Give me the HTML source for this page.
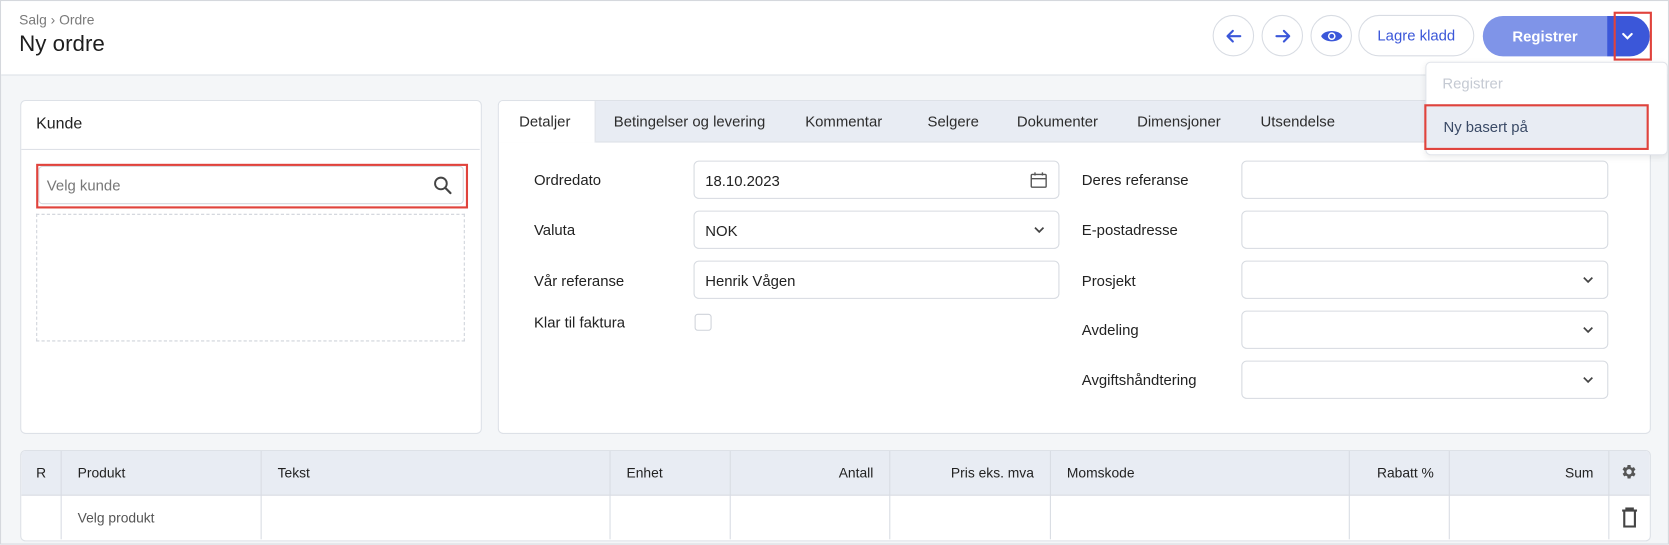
<!DOCTYPE html>
<html><head><meta charset="utf-8"><style>
html,body{margin:0;padding:0;width:1669px;height:545px;overflow:hidden;background:#fff}
#s{position:absolute;left:0;top:0;width:1569px;height:512px;transform:scale(1.0637);transform-origin:0 0;font-family:"Liberation Sans",sans-serif;color:#222;font-size:14px;background:#f4f6f8;border:1px solid #d5d8dd;box-sizing:border-box;overflow:hidden}
.a{position:absolute}
.hdr{left:0;top:0;width:1569px;height:69px;background:#fff;border-bottom:1px solid #dde1e7}
.circ{width:37px;height:37px;border:1px solid #d8dce3;border-radius:50%;top:13px;background:#fff}
.card{background:#fff;border:1px solid #dde1e7;border-radius:5px}
.inp{border:1px solid #d6dae0;border-radius:5px;background:#fff;height:36px;width:344px;box-sizing:border-box}
.lbl{font-size:14px;color:#222}
.tab{top:105px;font-size:14px;color:#2c2c2c}
.th{top:436px;font-size:13px;color:#222}
.vl{top:423px;width:1px;height:83px;background:#d8dce3}
.chev{position:absolute;right:12px;top:12px}
</style></head><body><div id="s">
<div class="a hdr"></div>
<div class="a" style="left:17px;top:10px;font-size:13px;color:#7a7a7a">Salg › Ordre</div>
<div class="a" style="left:17px;top:29px;font-size:21px;color:#1e1e1e">Ny ordre</div>

<div class="a circ" style="left:1139px"><svg class="a" style="left:10px;top:10px" width="18" height="18" viewBox="0 0 18 18"><path d="M15 9H3M8 4L3 9l5 5" stroke="#3b57d9" stroke-width="2" fill="none" stroke-linecap="round" stroke-linejoin="round"/></svg></div>
<div class="a circ" style="left:1185px"><svg class="a" style="left:10px;top:10px" width="18" height="18" viewBox="0 0 18 18"><path d="M3 9h12M10 4l5 5-5 5" stroke="#3b57d9" stroke-width="2" fill="none" stroke-linecap="round" stroke-linejoin="round"/></svg></div>
<div class="a circ" style="left:1231px"><svg class="a" style="left:8px;top:10px" width="22" height="18" viewBox="0 0 22 18"><path d="M1 9C4 2.5 18 2.5 21 9 18 15.5 4 15.5 1 9z" fill="#3b57d9"/><circle cx="11" cy="9" r="3.6" fill="#fff"/><circle cx="11" cy="9" r="2.2" fill="#3b57d9"/></svg></div>
<div class="a" style="left:1276px;top:13px;width:107px;height:37px;border:1px solid #d8dce3;border-radius:20px;background:#fff;color:#3b57d9;font-size:14px;text-align:center;line-height:37px">Lagre kladd</div>
<div class="a" style="left:1393px;top:14px;width:157px;height:38px;border-radius:20px;background:#7f94e8;overflow:hidden">
  <div class="a" style="left:0;top:0;width:117px;height:38px;color:#fff;font-weight:bold;font-size:14px;text-align:center;line-height:38px">Registrer</div>
  <div class="a" style="left:117px;top:0;width:40px;height:38px;background:#3b57d9"><svg class="a" style="left:13px;top:14px" width="12" height="10" viewBox="0 0 12 10"><path d="M2 3l4 4 4-4" stroke="#fff" stroke-width="2" fill="none" stroke-linecap="round"/></svg></div>
</div>
<div class="a" style="left:1516px;top:10px;width:32px;height:42px;border:2px solid #e0433c"></div>

<div class="a card" style="left:18px;top:93px;width:432px;height:312px"></div>
<div class="a" style="left:33px;top:107px;font-size:15px">Kunde</div>
<div class="a" style="left:19px;top:139px;width:431px;height:1px;background:#dde1e7"></div>
<div class="a" style="left:35px;top:155px;width:400px;height:36px;border:1px solid #d6dae0;border-radius:4px;box-sizing:border-box"></div>
<div class="a" style="left:43px;top:165px;color:#777;font-size:14px">Velg kunde</div>
<svg class="a" style="left:406px;top:164px" width="18" height="18" viewBox="0 0 18 18"><circle cx="7.5" cy="7.5" r="5.5" stroke="#444" stroke-width="1.8" fill="none"/><path d="M11.5 11.5l5 5" stroke="#444" stroke-width="2" stroke-linecap="round"/></svg>
<div class="a" style="left:33px;top:153px;width:402px;height:38px;border:2px solid #e0433c"></div>
<div class="a" style="left:33px;top:200px;width:401px;height:118px;border:1px dashed #cfd3da"></div>

<div class="a card" style="left:467px;top:93px;width:1082px;height:312px;overflow:hidden">
  <div class="a" style="left:0;top:0;width:1082px;height:38px;background:#e8ecf3;border-bottom:1px solid #dde1e7"></div>
  <div class="a" style="left:0;top:0;width:90px;height:39px;background:#fff;border-right:1px solid #dde1e7"></div>
</div>
<div class="a tab" style="left:487px">Detaljer</div>
<div class="a tab" style="left:576px">Betingelser og levering</div>
<div class="a tab" style="left:756px">Kommentar</div>
<div class="a tab" style="left:871px">Selgere</div>
<div class="a tab" style="left:955px">Dokumenter</div>
<div class="a tab" style="left:1068px">Dimensjoner</div>
<div class="a tab" style="left:1184px">Utsendelse</div>

<div class="a lbl" style="left:501px;top:160px">Ordredato</div>
<div class="a lbl" style="left:501px;top:207px">Valuta</div>
<div class="a lbl" style="left:501px;top:255px">Vår referanse</div>
<div class="a lbl" style="left:501px;top:294px">Klar til faktura</div>
<div class="a inp" style="left:651px;top:150px"><span class="a" style="left:10px;top:10px">18.10.2023</span><svg class="chev" style="top:9px;right:10px" width="17" height="17" viewBox="0 0 17 17"><rect x="1.5" y="3" width="14" height="12" stroke="#555" stroke-width="1.3" fill="none" rx="1"/><path d="M1.5 7h14M5 1v3M12 1v3" stroke="#555" stroke-width="1.3"/></svg></div>
<div class="a inp" style="left:651px;top:197px"><span class="a" style="left:10px;top:10px">NOK</span><svg class="chev" width="12" height="10" viewBox="0 0 12 10"><path d="M2 3l4 4 4-4" stroke="#444" stroke-width="1.6" fill="none"/></svg></div>
<div class="a inp" style="left:651px;top:244px"><span class="a" style="left:10px;top:10px">Henrik Vågen</span></div>
<div class="a" style="left:652px;top:294px;width:16px;height:16px;border:1px solid #cfd3da;border-radius:3px;box-sizing:border-box"></div>

<div class="a lbl" style="left:1016px;top:160px">Deres referanse</div>
<div class="a lbl" style="left:1016px;top:207px">E-postadresse</div>
<div class="a lbl" style="left:1016px;top:255px">Prosjekt</div>
<div class="a lbl" style="left:1016px;top:301px">Avdeling</div>
<div class="a lbl" style="left:1016px;top:348px">Avgiftshåndtering</div>
<div class="a inp" style="left:1166px;top:150px;width:345px"></div>
<div class="a inp" style="left:1166px;top:197px;width:345px"></div>
<div class="a inp" style="left:1166px;top:244px;width:345px"><svg class="chev" width="12" height="10" viewBox="0 0 12 10"><path d="M2 3l4 4 4-4" stroke="#444" stroke-width="1.6" fill="none"/></svg></div>
<div class="a inp" style="left:1166px;top:291px;width:345px"><svg class="chev" width="12" height="10" viewBox="0 0 12 10"><path d="M2 3l4 4 4-4" stroke="#444" stroke-width="1.6" fill="none"/></svg></div>
<div class="a inp" style="left:1166px;top:338px;width:345px"><svg class="chev" width="12" height="10" viewBox="0 0 12 10"><path d="M2 3l4 4 4-4" stroke="#444" stroke-width="1.6" fill="none"/></svg></div>

<div class="a" style="left:1339px;top:57px;width:226px;height:86px;background:#fff;border:1px solid #e1e4ea;border-radius:5px;box-shadow:0 2px 6px rgba(0,0,0,.08)"></div>
<div class="a" style="left:1355px;top:69px;color:#c5cad3;font-size:14px">Registrer</div>
<div class="a" style="left:1339px;top:97px;width:210px;height:41px;background:#e8ecf3"></div>
<div class="a" style="left:1356px;top:110px;color:#3a4a66;font-size:14px">Ny basert på</div>
<div class="a" style="left:1338px;top:97px;width:207px;height:39px;border:2px solid #e0433c"></div>

<div class="a card" style="left:18px;top:422px;width:1531px;height:84px;overflow:hidden">
  <div class="a" style="left:0;top:0;width:1531px;height:41px;background:#e8ecf3;border-bottom:1px solid #d8dce3"></div>
</div>
<div class="a vl" style="left:56px"></div><div class="a vl" style="left:244px"></div><div class="a vl" style="left:572px"></div><div class="a vl" style="left:685px"></div><div class="a vl" style="left:835px"></div><div class="a vl" style="left:986px"></div><div class="a vl" style="left:1267px"></div><div class="a vl" style="left:1361px"></div><div class="a vl" style="left:1511px"></div>
<div class="a th" style="left:33px">R</div>
<div class="a th" style="left:72px">Produkt</div>
<div class="a th" style="left:260px">Tekst</div>
<div class="a th" style="left:588px">Enhet</div>
<div class="a th" style="left:720px;width:100px;text-align:right">Antall</div>
<div class="a th" style="left:851px;width:120px;text-align:right">Pris eks. mva</div>
<div class="a th" style="left:1002px">Momskode</div>
<div class="a th" style="left:1247px;width:100px;text-align:right">Rabatt %</div>
<div class="a th" style="left:1397px;width:100px;text-align:right">Sum</div>
<svg class="a" style="left:1522px;top:434px" width="17" height="17" viewBox="0 0 24 24"><path fill="#555" d="M19.4 13a7.5 7.5 0 000-2l2.1-1.6-2-3.5-2.5 1a7 7 0 00-1.7-1L15 3h-4l-.4 2.7a7 7 0 00-1.7 1l-2.5-1-2 3.5L6.6 11a7.5 7.5 0 000 2l-2.1 1.6 2 3.5 2.5-1a7 7 0 001.7 1L11 21h4l.4-2.7a7 7 0 001.7-1l2.5 1 2-3.5zM13 15.5a3.5 3.5 0 110-7 3.5 3.5 0 010 7z" transform="translate(-1 0)"/></svg>
<div class="a" style="left:72px;top:478px;font-size:13px;color:#555">Velg produkt</div>
<svg class="a" style="left:1523px;top:476px" width="16" height="19" viewBox="0 0 16 19"><path d="M1 3h14M5 3V1h6v2M3 3v15h10V3" stroke="#444" stroke-width="2" fill="none"/></svg>
</div></body></html>
